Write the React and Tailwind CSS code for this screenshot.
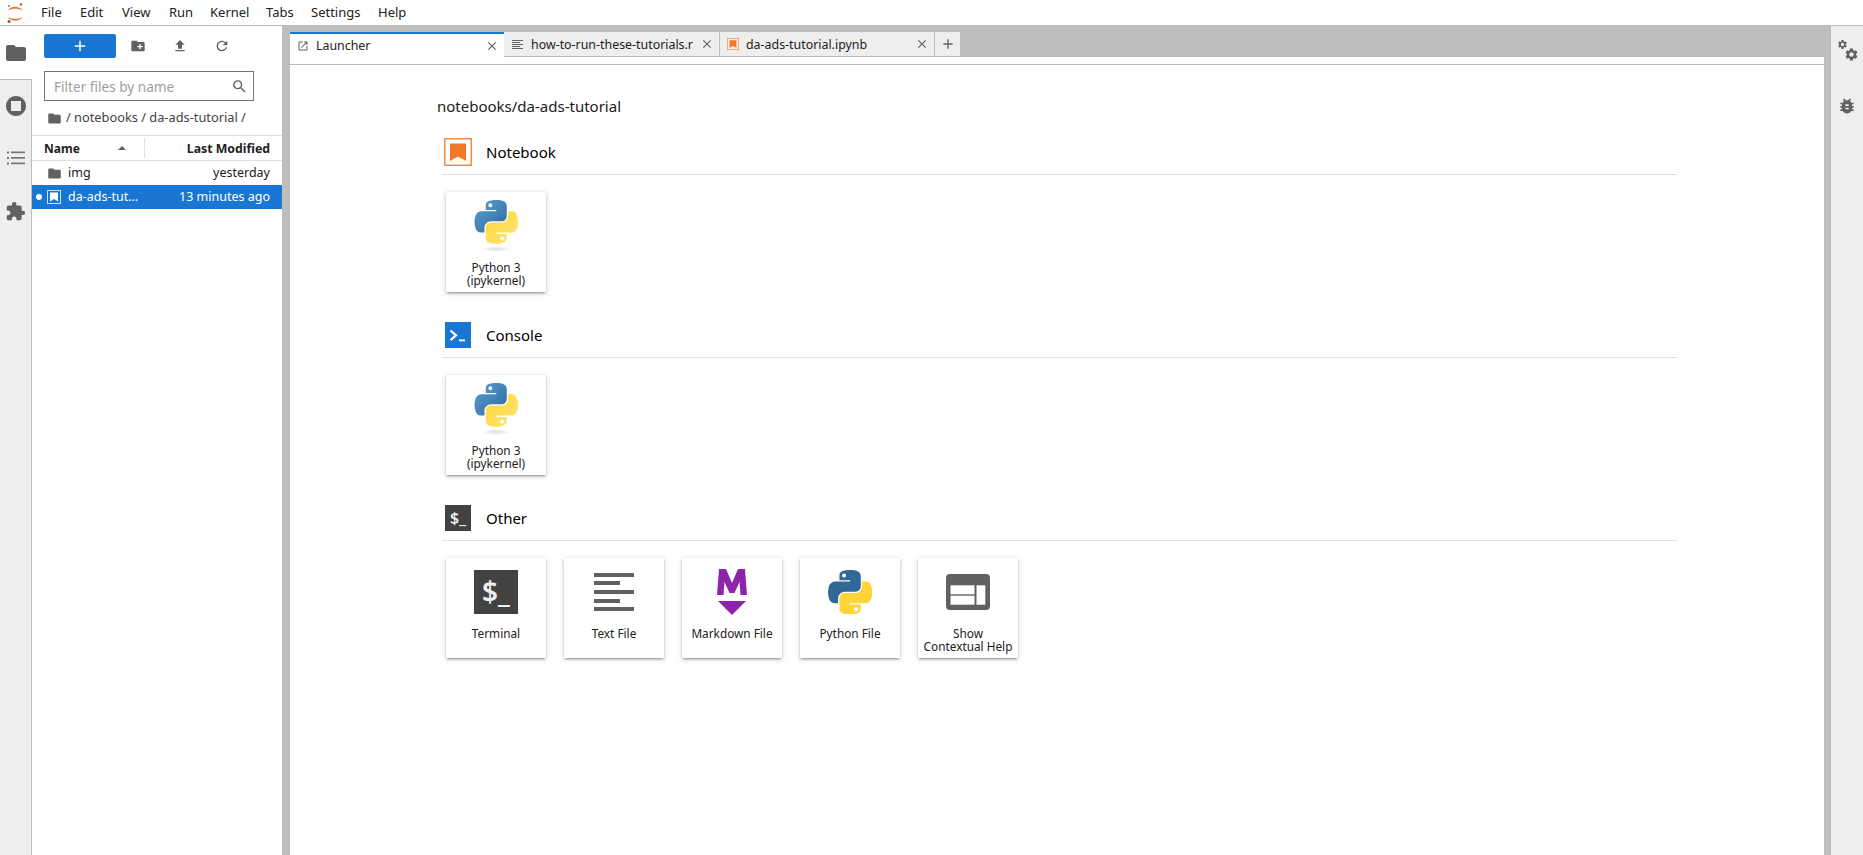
import React from 'react';
import { MdFolder, MdCreateNewFolder, MdFileUpload, MdRefresh, MdSearch, MdClose, MdAdd, MdOpenInNew, MdSettings, MdBugReport, MdExtension } from 'react-icons/md';

const BLUE = "M54.92 0c-4.58.02-8.96.41-12.81 1.09-11.35 2-13.41 6.2-13.41 13.93v10.21h26.81v3.4H18.64c-7.79 0-14.62 4.68-16.75 13.59-2.46 10.21-2.57 16.57 0 27.23 1.91 7.94 6.46 13.59 14.25 13.59h9.22V70.82c0-8.85 7.66-16.66 16.75-16.66h26.78c7.46 0 13.41-6.14 13.41-13.63V15.02c0-7.27-6.13-12.73-13.41-13.93C64.28.33 59.5-.02 54.92 0zM40.42 8.22c2.77 0 5.03 2.3 5.03 5.12 0 2.81-2.26 5.09-5.03 5.09-2.78 0-5.03-2.28-5.03-5.09 0-2.82 2.25-5.12 5.03-5.12z";
const YELLOW = "M85.64 28.66v11.91c0 9.24-7.83 17-16.75 17H42.11c-7.34 0-13.41 6.28-13.41 13.63v25.53c0 7.27 6.32 11.54 13.41 13.63 8.49 2.5 16.64 2.95 26.78 0 6.75-1.95 13.41-5.89 13.41-13.63V86.5H55.52v-3.4h40.19c7.79 0 10.7-5.44 13.41-13.59 2.8-8.4 2.68-16.47 0-27.23-1.93-7.75-5.6-13.59-13.41-13.59H85.64zM70.58 93.33c2.78 0 5.03 2.28 5.03 5.09 0 2.82-2.25 5.12-5.03 5.12-2.77 0-5.03-2.3-5.03-5.12 0-2.81 2.26-5.09 5.03-5.09z";

function KernelLogo({ id }) {
  return (
    <svg width="44" height="52" viewBox="0 0 44 52">
      <defs>
        <linearGradient id={id + 'b'} x1="0" y1="0" x2="1" y2="1">
          <stop offset="0" stopColor="#5a9fd4" />
          <stop offset="1" stopColor="#306998" />
        </linearGradient>
        <linearGradient id={id + 'y'} x1="0" y1="0" x2="1" y2="1">
          <stop offset="0" stopColor="#ffd43b" />
          <stop offset="1" stopColor="#ffe873" />
        </linearGradient>
        <radialGradient id={id + 's'}>
          <stop offset="0" stopColor="#b8b8b8" stopOpacity="0.5" />
          <stop offset="1" stopColor="#b8b8b8" stopOpacity="0" />
        </radialGradient>
      </defs>
      <g transform="translate(0.5 0) scale(0.392)">
        <path d={BLUE} fill={`url(#${id}b)`} fillRule="evenodd" />
        <path d={YELLOW} fill={`url(#${id}y)`} fillRule="evenodd" />
      </g>
      <ellipse cx="22" cy="49" rx="15" ry="3" fill={`url(#${id}s)`} />
    </svg>
  );
}

function PythonFlat() {
  return (
    <svg width="44" height="44" viewBox="0 0 110.42 109.85">
      <path d={BLUE} fill="#306998" fillRule="evenodd" />
      <path d={YELLOW} fill="#ffd43b" fillRule="evenodd" />
    </svg>
  );
}

function NotebookIcon({ size = 28 }) {
  return (
    <svg width={size} height={size} viewBox="0 0 28 28">
      <rect x="0.75" y="0.75" width="26.5" height="26.5" fill="none" stroke="#f37726" strokeWidth="1.5" opacity="0.85" />
      <path d="M6 5.5h16v17.5l-8-4.5-8 4.5z" fill="#f37726" />
    </svg>
  );
}

function ConsoleIcon() {
  return (
    <svg width="26" height="26" viewBox="0 0 26 26">
      <rect width="26" height="26" fill="#1976d2" />
      <path d="M5.5 8.500l5.500 4.800-5.500 4.800" fill="none" stroke="#fff" strokeWidth="2.300" />
      <rect x="14" y="17.500" width="6" height="1.800" fill="#fff" />
    </svg>
  );
}

function TerminalMark({ big }) {
  return big ? (
    <div className="w-[44px] h-[44px] bg-[#424242] text-[#eeeeee] flex items-center justify-center text-[28px] font-semibold leading-none pb-[3px]">$_</div>
  ) : (
    <div className="w-[26px] h-[26px] bg-[#424242] text-[#eeeeee] flex items-center justify-center text-[16px] font-semibold leading-none pb-[1px]">$_</div>
  );
}

function TextLines() {
  return (
    <div className="w-[40px] flex flex-col gap-[4.7px]">
      <div className="h-[4px] w-[40px] bg-[#616161]" />
      <div className="h-[4px] w-[26px] bg-[#616161]" />
      <div className="h-[4px] w-[40px] bg-[#616161]" />
      <div className="h-[4px] w-[26px] bg-[#616161]" />
      <div className="h-[4px] w-[40px] bg-[#616161]" />
    </div>
  );
}

function MarkdownIcon() {
  return (
    <svg width="30" height="46" viewBox="0 0 30 46">
      <path d="M2 0h7l6 14 6-14h7l2 26h-6.500l-1-13-5 11h-5l-5-11-1 13H0z" fill="#8e24aa" />
      <path d="M1 32h28L15 46z" fill="#8e24aa" />
    </svg>
  );
}

function HelpIcon() {
  return (
    <svg width="44" height="36" viewBox="0 0 44 36">
      <rect width="44" height="36" rx="4" fill="#616161" />
      <rect x="4.500" y="11.300" width="24" height="9" fill="#fff" />
      <rect x="4.500" y="21.700" width="24" height="9" fill="#fff" />
      <rect x="30.500" y="11.300" width="8.800" height="19.400" fill="#fff" />
    </svg>
  );
}

function Card({ icon, label }) {
  return (
    <div className="w-[100px] h-[100px] bg-white flex flex-col items-center shadow-[0_1px_5px_0_rgba(0,0,0,0.2),0_2px_2px_0_rgba(0,0,0,0.14),0_3px_1px_-2px_rgba(0,0,0,0.12)]">
      <div className="h-[68px] w-full flex items-center justify-center shrink-0">{icon}</div>
      <div className="mt-[1px] text-[11.800px] leading-[13px] text-center text-[#212121] whitespace-pre-line">{label}</div>
    </div>
  );
}

function Section({ icon, title, children }) {
  return (
    <div className="h-[183px]">
      <div className="h-[37px] border-b border-[#e0e0e0] flex items-start pl-[2px]">
        <div className="w-[28px] h-[28px] flex items-center justify-center">{icon}</div>
        <div className="ml-[14px] mt-[5px] text-[15px] leading-[18px] text-black">{title}</div>
      </div>
      <div className="mt-[17px] ml-[4px] flex gap-[18px]">{children}</div>
    </div>
  );
}

function Tab({ width, active, icon, label, pad }) {
  return (
    <div className={`flex items-center h-full shrink-0 relative ${active ? 'bg-white border-t-2 border-[#1976d2]' : 'bg-[#eeeeee] border-r border-b border-[#bdbdbd]'} ${width}`}>
      <div className={`flex items-center justify-center ${pad}`}>{icon}</div>
      <div className={`flex-1 min-w-0 whitespace-nowrap text-[12.400px] text-[#212121] ${active ? 'pt-[1px]' : 'pt-[3px]'}`}>{label}</div>
      <div className="w-[24px] flex items-center justify-center shrink-0 text-[#616161]"><MdClose size={14} /></div>
    </div>
  );
}

function RowNotebookIcon() {
  return (
    <svg width="14" height="14" viewBox="0 0 14 14">
      <rect x="0.500" y="0.500" width="13" height="13" fill="none" stroke="#cfe2f5" strokeWidth="1" />
      <path d="M3 2.500h8v9l-4-2.500-4 2.500z" fill="#fff" />
    </svg>
  );
}

function MiniLines() {
  return (
    <div className="w-[11px] flex flex-col gap-[1px]">
      <div className="h-[1px] w-[11px] bg-[#616161]" />
      <div className="h-[1px] w-[8px] bg-[#616161]" />
      <div className="h-[1px] w-[11px] bg-[#616161]" />
      <div className="h-[1px] w-[8px] bg-[#616161]" />
      <div className="h-[1px] w-[11px] bg-[#616161]" />
    </div>
  );
}

const menus = [['File', 'w-[39px]'], ['Edit', 'w-[42px]'], ['View', 'w-[47px]'], ['Run', 'w-[41px]'], ['Kernel', 'w-[56px]'], ['Tabs', 'w-[45px]'], ['Settings', 'w-[67px]'], ['Help', 'w-[40px]']];

export default function App() {
  return (
    <div className="w-[1863px] h-[855px] overflow-hidden flex flex-col bg-white font-['Noto_Sans',sans-serif] text-[#212121]">
      <div className="h-[26px] shrink-0 flex items-center border-b border-[#bdbdbd] bg-white">
        <div className="w-[41px] shrink-0 pl-[7px]">
          <svg width="18" height="22" viewBox="0 0 18 22">
            <path d="M1 8.500C3 3.500 13 3.500 15.500 8.500C12 6 4.500 6 1 8.500z" fill="#f37726" />
            <path d="M1 15C3.500 20 13 20 15.500 15C12 17.500 4.500 17.500 1 15z" fill="#f37726" />
            <circle cx="14" cy="2.500" r="1.300" fill="#757575" />
            <circle cx="2" cy="19.500" r="1.500" fill="#616161" />
            <circle cx="2" cy="4" r="0.900" fill="#757575" />
          </svg>
        </div>
        {menus.map(([m, w]) => (
          <div key={m} className={`text-[13px] text-[#212121] ${w}`}>{m}</div>
        ))}
      </div>
      <div className="flex-1 flex bg-[#bdbdbd] min-h-0">
        <div className="w-[32px] shrink-0 bg-[#eeeeee] flex flex-col border-r border-[#bdbdbd]">
          <div className="h-[54px] -mr-[1px] bg-white border-b border-[#bdbdbd] flex items-center justify-center text-[#616161]"><MdFolder size={24} /></div>
          <div className="h-[52px] flex items-center justify-center text-[#616161]">
            <svg width="24" height="24" viewBox="0 0 24 24"><path d="M12 2C6.470 2 2 6.470 2 12s4.470 10 10 10 10-4.470 10-10S17.530 2 12 2zm5 15H7V7h10z" fill="#616161" fillRule="evenodd" /></svg>
          </div>
          <div className="h-[52px] flex items-center justify-center">
            <svg width="18" height="14" viewBox="0 0 18 14" fill="#757575">
              <rect x="0" y="0.500" width="2" height="2" /><rect x="4" y="0.500" width="14" height="1.700" />
              <rect x="0" y="6" width="2" height="2" /><rect x="4" y="6" width="14" height="1.700" />
              <rect x="0" y="11.500" width="2" height="2" /><rect x="4" y="11.500" width="14" height="1.700" />
            </svg>
          </div>
          <div className="h-[54px] flex items-center justify-center text-[#616161]"><MdExtension size={21} /></div>
        </div>
        <div className="w-[250px] shrink-0 bg-white flex flex-col">
          <div className="flex items-center h-[24px] mt-[8px] pl-[12px] shrink-0">
            <div className="w-[72px] h-[24px] rounded-[2px] bg-[#1976d2] flex items-center justify-center text-white"><MdAdd size={18} /></div>
            <div className="ml-[14px] w-[16px] flex justify-center text-[#616161]"><MdCreateNewFolder size={16} /></div>
            <div className="ml-[26px] w-[16px] flex justify-center text-[#616161]"><MdFileUpload size={16} /></div>
            <div className="ml-[26px] w-[16px] flex justify-center text-[#616161]"><MdRefresh size={16} /></div>
          </div>
          <div className="mt-[13px] ml-[12px] w-[210px] h-[30px] border border-[#757575] flex items-center pl-[9px] pr-[5px] shrink-0">
            <div className="flex-1 pt-[2px] text-[13.600px] text-[#9e9e9e]">Filter files by name</div>
            <MdSearch size={17} className="text-[#616161]" />
          </div>
          <div className="h-[34px] flex items-center pl-[15px] shrink-0 text-[#424242]">
            <MdFolder size={15} className="text-[#616161]" />
            <div className="ml-[4px] text-[12.800px]">/ notebooks / da-ads-tutorial /</div>
          </div>
          <div className="h-[26px] flex items-center border-t border-b border-[#e0e0e0] shrink-0">
            <div className="w-[113px] pl-[12px] h-[20px] flex items-center justify-between border-r border-[#e0e0e0] pr-[18px]">
              <span className="pt-[2px] text-[12px] font-bold text-[#212121]">Name</span>
              <span className="w-0 h-0 border-l-[4px] border-r-[4px] border-b-[4px] border-l-transparent border-r-transparent border-b-[#616161]" />
            </div>
            <div className="flex-1 pt-[2px] text-right pr-[12px] text-[12.300px] font-bold text-[#212121]">Last Modified</div>
          </div>
          <div className="h-[24px] flex items-center pl-[15px] pr-[12px] shrink-0 text-[#212121]">
            <MdFolder size={15} className="text-[#616161]" />
            <div className="ml-[6px] pt-[1px] text-[12.500px] flex-1">img</div>
            <div className="pt-[1px] text-[12.500px]">yesterday</div>
          </div>
          <div className="h-[24px] flex items-center pl-[4px] pr-[12px] bg-[#1976d2] text-white shrink-0">
            <div className="w-[6px] h-[6px] rounded-full bg-white" />
            <div className="ml-[5px]"><RowNotebookIcon /></div>
            <div className="ml-[7px] pt-[1px] text-[12.500px] whitespace-nowrap">da-ads-tut…</div>
            <div className="flex-1 pt-[1px] text-[12.500px] text-right">13 minutes ago</div>
          </div>
        </div>
        <div className="w-[8px] shrink-0" />
        <div className="w-[1534px] shrink-0 flex flex-col pt-[6px]">
          <div className="h-[25px] flex shrink-0">
            <Tab width="w-[214px]" active pad="w-[26px]" icon={<MdOpenInNew size={12} className="text-[#616161]" />} label="Launcher" />
            <Tab width="w-[216px]" pad="w-[27px]" icon={<MiniLines />} label="how-to-run-these-tutorials.r" />
            <Tab width="w-[215px]" pad="w-[26px]" icon={<NotebookIcon size={12} />} label="da-ads-tutorial.ipynb" />
            <div className="w-[25px] bg-[#eeeeee] border-b border-[#bdbdbd] flex items-center justify-center text-[#616161]"><MdAdd size={16} /></div>
          </div>
          <div className="h-[8px] bg-white border-b border-[#bdbdbd] shrink-0" />
          <div className="flex-1 bg-white">
            <div className="ml-[147px] mt-[31px] text-[15px] leading-[20px] text-[#212121]">notebooks/da-ads-tutorial</div>
            <div className="ml-[152px] mt-[22px] w-[1235px]">
              <Section icon={<NotebookIcon />} title="Notebook">
                <Card icon={<KernelLogo id="k1" />} label={"Python 3\n(ipykernel)"} />
              </Section>
              <Section icon={<ConsoleIcon />} title="Console">
                <Card icon={<KernelLogo id="k2" />} label={"Python 3\n(ipykernel)"} />
              </Section>
              <Section icon={<TerminalMark />} title="Other">
                <Card icon={<TerminalMark big />} label="Terminal" />
                <Card icon={<TextLines />} label="Text File" />
                <Card icon={<MarkdownIcon />} label="Markdown File" />
                <Card icon={<PythonFlat />} label="Python File" />
                <Card icon={<HelpIcon />} label={"Show\nContextual Help"} />
              </Section>
            </div>
          </div>
        </div>
        <div className="w-[7px] shrink-0" />
        <div className="w-[32px] shrink-0 bg-[#eeeeee] flex flex-col items-center">
          <div className="h-[54px] w-full flex flex-col pl-[6px] pt-[13px] text-[#616161]">
            <MdSettings size={11} />
            <MdSettings size={15} className="ml-[7px] -mt-[3px]" />
          </div>
          <div className="h-[52px] flex items-center justify-center text-[#616161]"><MdBugReport size={20} /></div>
        </div>
      </div>
    </div>
  );
}
